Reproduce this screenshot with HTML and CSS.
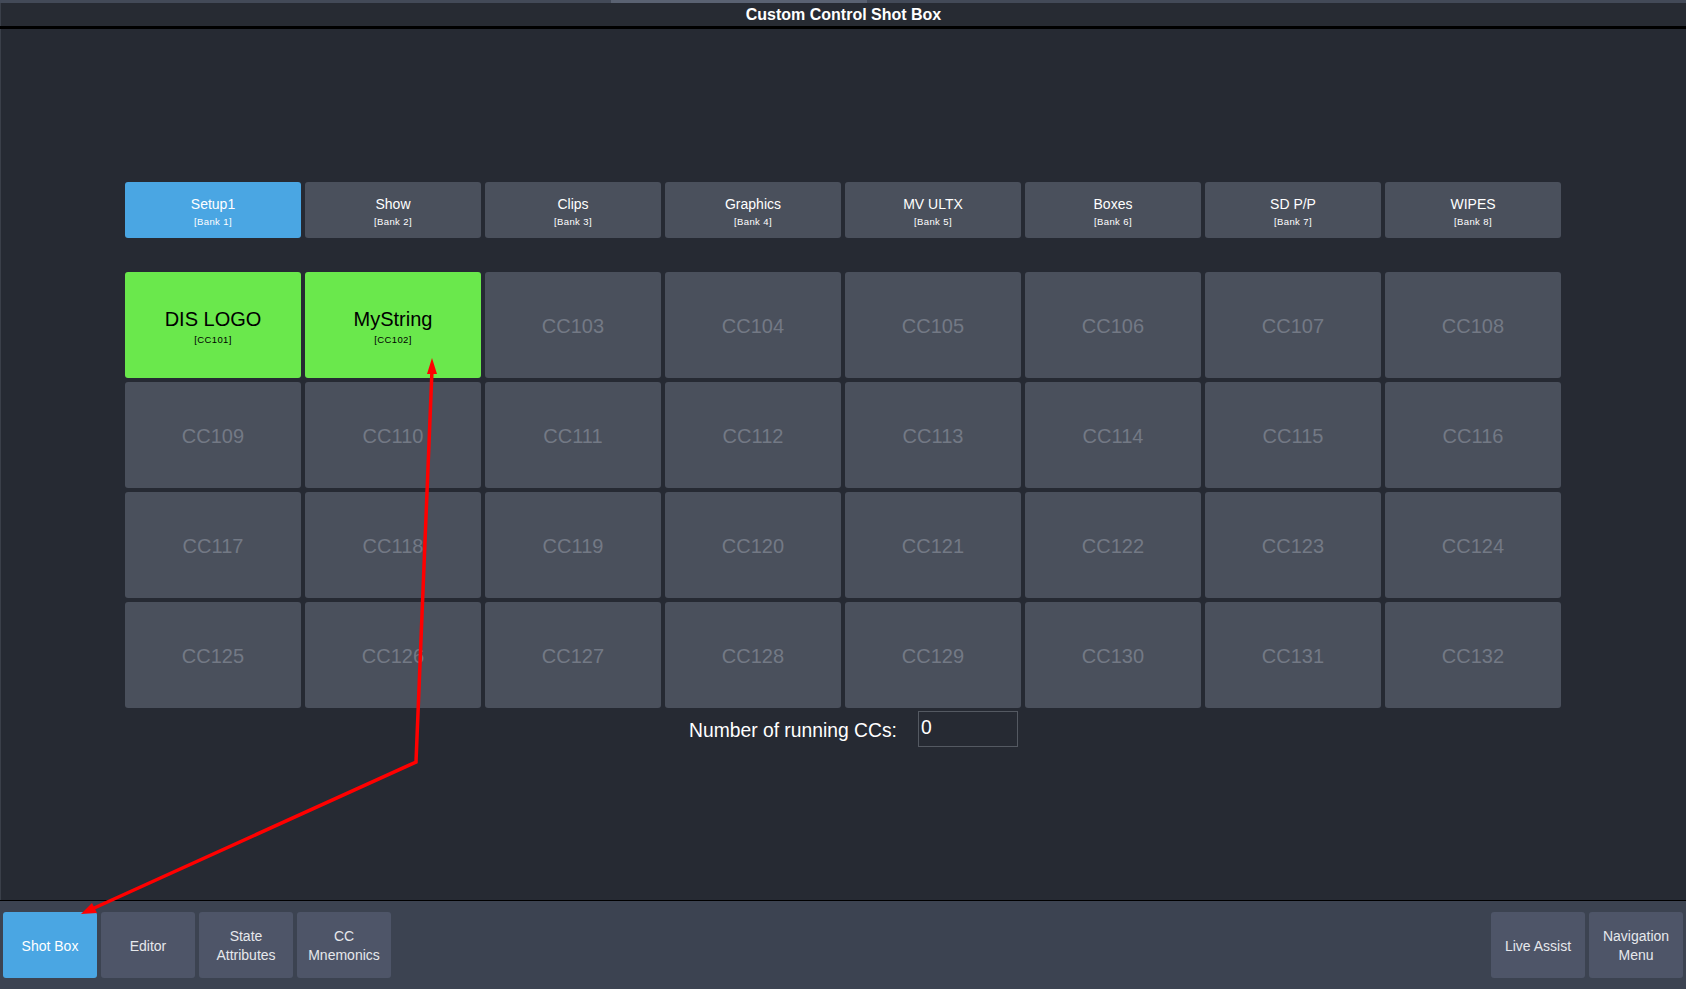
FILE: index.html
```html
<!DOCTYPE html>
<html>
<head>
<meta charset="utf-8">
<title>Custom Control Shot Box</title>
<link rel="stylesheet" href="styles.css">
</head>
<body>
<div class="app">
  <div class="topband"><div class="topband-seg"></div></div>
  <div class="titlebar">Custom Control Shot Box</div>
  <div class="sep"></div>
  <div class="main">
    <div class="tabs">
      <div class="tab active"><span class="t">Setup1</span><span class="s">[Bank 1]</span></div>
      <div class="tab"><span class="t">Show</span><span class="s">[Bank 2]</span></div>
      <div class="tab"><span class="t">Clips</span><span class="s">[Bank 3]</span></div>
      <div class="tab"><span class="t">Graphics</span><span class="s">[Bank 4]</span></div>
      <div class="tab"><span class="t">MV ULTX</span><span class="s">[Bank 5]</span></div>
      <div class="tab"><span class="t">Boxes</span><span class="s">[Bank 6]</span></div>
      <div class="tab"><span class="t">SD P/P</span><span class="s">[Bank 7]</span></div>
      <div class="tab"><span class="t">WIPES</span><span class="s">[Bank 8]</span></div>
    </div>
    <div class="grid">
      <div class="tile on"><span class="t">DIS LOGO</span><span class="s">[CC101]</span></div>
      <div class="tile on"><span class="t">MyString</span><span class="s">[CC102]</span></div>
      <div class="tile">CC103</div>
      <div class="tile">CC104</div>
      <div class="tile">CC105</div>
      <div class="tile">CC106</div>
      <div class="tile">CC107</div>
      <div class="tile">CC108</div>
      <div class="tile">CC109</div>
      <div class="tile">CC110</div>
      <div class="tile">CC111</div>
      <div class="tile">CC112</div>
      <div class="tile">CC113</div>
      <div class="tile">CC114</div>
      <div class="tile">CC115</div>
      <div class="tile">CC116</div>
      <div class="tile">CC117</div>
      <div class="tile">CC118</div>
      <div class="tile">CC119</div>
      <div class="tile">CC120</div>
      <div class="tile">CC121</div>
      <div class="tile">CC122</div>
      <div class="tile">CC123</div>
      <div class="tile">CC124</div>
      <div class="tile">CC125</div>
      <div class="tile">CC126</div>
      <div class="tile">CC127</div>
      <div class="tile">CC128</div>
      <div class="tile">CC129</div>
      <div class="tile">CC130</div>
      <div class="tile">CC131</div>
      <div class="tile">CC132</div>
    </div>
    <div class="running">
      <span class="running-label">Number of running CCs:</span>
      <div class="running-box">0</div>
    </div>
  </div>
  <div class="bottombar">
    <div class="btn active">Shot Box</div>
    <div class="btn">Editor</div>
    <div class="btn">State<br>Attributes</div>
    <div class="btn">CC<br>Mnemonics</div>
    <div class="spacer"></div>
    <div class="btn">Live Assist</div>
    <div class="btn">Navigation<br>Menu</div>
  </div>
  <svg class="annot" width="1686" height="989" viewBox="0 0 1686 989">
    <polyline points="432,370 416,762 92,909" fill="none" stroke="#ff0000" stroke-width="3.5" stroke-linejoin="miter"/>
    <polygon points="432,358 427,374 437,374" fill="#ff0000"/>
    <polygon points="81,914 97,913 92,903" fill="#ff0000"/>
  </svg>
</div>
</body>
</html>
```
FILE: styles.css
```css
* { box-sizing: border-box; }
html, body { margin: 0; padding: 0; }
body {
  width: 1686px;
  height: 989px;
  overflow: hidden;
  background: #262a33;
  font-family: "Liberation Sans", Arial, sans-serif;
}
.app {
  position: relative;
  width: 1686px;
  height: 989px;
  display: flex;
  flex-direction: column;
}
.topband {
  height: 3px;
  background: #434a58;
  display: flex;
}
.topband-seg {
  margin-left: 611px;
  width: 256px;
  background: #5a6272;
}
.titlebar {
  height: 23px;
  line-height: 24px;
  background: #272b33;
  color: #ffffff;
  font-weight: bold;
  font-size: 16px;
  text-align: center;
  border-left: 1px solid #3a3f49;
}
.sep {
  height: 3px;
  background: #000000;
}
.main {
  flex: 1;
  padding: 153px 0 0 125px;
  border-left: 1px solid #3a3f49;
  display: flex;
  flex-direction: column;
}
.tabs {
  display: grid;
  grid-template-columns: repeat(8, 176px);
  column-gap: 4px;
  margin-left: -1px;
}
.tab {
  height: 56px;
  background: #4a505c;
  border-radius: 3px;
  color: #ffffff;
  display: flex;
  flex-direction: column;
  align-items: center;
  justify-content: center;
  gap: 4px;
  padding-top: 2px;
}
.tab.active { background: #4aa6e3; }
.tab .t { font-size: 14px; line-height: 16px; }
.tab .s { font-size: 9.5px; line-height: 11px; letter-spacing: 0.4px; }
.grid {
  margin-top: 34px;
  margin-left: -1px;
  display: grid;
  grid-template-columns: repeat(8, 176px);
  grid-auto-rows: 106px;
  gap: 4px;
}
.tile {
  background: #4a505c;
  border-radius: 3px;
  color: #737985;
  font-size: 20px;
  padding-top: 2px;
  display: flex;
  flex-direction: column;
  align-items: center;
  justify-content: center;
}
.tile.on {
  background: #6ae84c;
  color: #000000;
  gap: 4px;
}
.tile .t { font-size: 20px; line-height: 22px; }
.tile .s { font-size: 9.5px; line-height: 11px; letter-spacing: 0.4px; }
.running {
  margin-top: 3px;
  padding-left: 563px;
  display: flex;
  align-items: center;
  gap: 21px;
}
.running-label {
  color: #ffffff;
  font-size: 19.3px;
  padding-top: 3px;
}
.running-box {
  width: 100px;
  height: 36px;
  border: 1px solid #545962;
  color: #ffffff;
  font-size: 19.3px;
  line-height: 32px;
  padding-left: 2px;
}
.bottombar {
  height: 89px;
  border-top: 1px solid #000000;
  background: #3c4351;
  padding: 11px 3px;
  display: flex;
  gap: 4px;
}
.spacer { flex: 1; }
.btn {
  width: 94px;
  height: 66px;
  background: #4e5568;
  border-radius: 3px;
  color: #e6e8ec;
  font-size: 14px;
  line-height: 19px;
  padding-top: 2px;
  text-align: center;
  display: flex;
  align-items: center;
  justify-content: center;
}
.btn.active { background: #4aa6e3; color: #ffffff; }
.annot {
  position: absolute;
  left: 0;
  top: 0;
  pointer-events: none;
}
```
